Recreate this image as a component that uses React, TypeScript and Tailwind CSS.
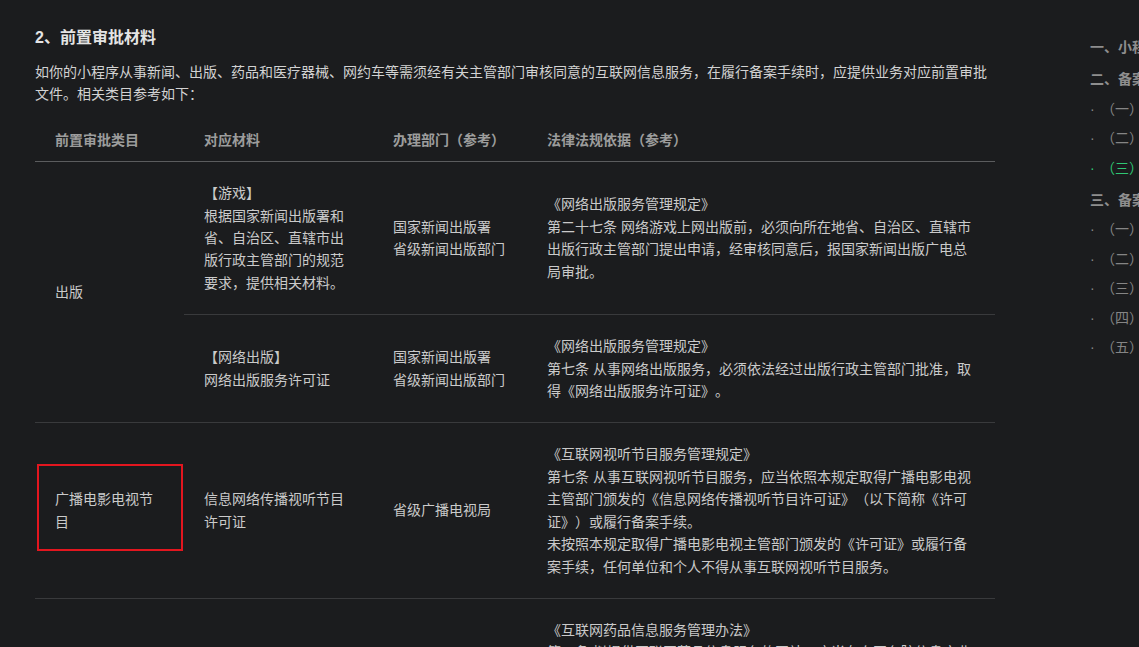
import React from "react";

type TocItem = { label: string; top?: boolean; active?: boolean };

const tocItems: TocItem[] = [
  { label: "一、小程序备案须知", top: true },
  { label: "二、备案材料准备", top: true },
  { label: "（一）主体材料" },
  { label: "（二）小程序材料" },
  { label: "（三）前置审批材料", active: true },
  { label: "三、备案流程", top: true },
  { label: "（一）填写主体信息" },
  { label: "（二）填写小程序信息" },
  { label: "（三）平台初审" },
  { label: "（四）工信部短信核验" },
  { label: "（五）通管局审核" },
];

const td = "px-5 py-5 align-middle border-b border-[#393a3c]";
const th = "px-5 py-[10px] text-left font-semibold text-[#9c9c9c] border-b border-[#5b5c5e]";

const tocColor = (item: TocItem) => {
  if (item.active) return "text-[#2fc774]";
  if (item.top) return "font-semibold text-[#8e8e8e]";
  return "text-[#858585]";
};

const App = () => {
  return (
    <div
      id="page"
      className="w-[1139px] h-[647px] overflow-hidden flex bg-[#1b1c1e] text-[14px] leading-[22.4px] text-[#cacaca] font-['Liberation_Sans','Noto_Sans_CJK_SC',sans-serif] [text-spacing-trim:space-all]"
    >
      <main id="content" className="w-[995px] shrink-0 pl-[35px] pt-[26px]">
        <h2 className="text-[16px] leading-[24px] font-bold text-[#e4e4e4]">2、前置审批材料</h2>
        <p className="mt-[11px] text-[#d2d2d2]">
          如你的小程序从事新闻、出版、药品和医疗器械、网约车等需须经有关主管部门审核同意的互联网信息服务，在履行备案手续时，应提供业务对应前置审批文件。相关类目参考如下：
        </p>

        <table className="mt-[13px] w-[960px] table-fixed">
          <colgroup>
            <col className="w-[149px]" />
            <col className="w-[189px]" />
            <col className="w-[154px]" />
            <col className="w-[468px]" />
          </colgroup>
          <thead>
            <tr>
              <th className={th}>前置审批类目</th>
              <th className={th}>对应材料</th>
              <th className={th}>办理部门（参考）</th>
              <th className={th}>法律法规依据（参考）</th>
            </tr>
          </thead>
          <tbody>
            <tr>
              <td rowSpan={2} className={td}>出版</td>
              <td className={td}>
                【游戏】
                <br />
                根据国家新闻出版署和省、自治区、直辖市出版行政主管部门的规范要求，提供相关材料。
              </td>
              <td className={td}>
                国家新闻出版署
                <br />
                省级新闻出版部门
              </td>
              <td className={td}>
                《网络出版服务管理规定》
                <br />
                第二十七条 网络游戏上网出版前，必须向所在地省、自治区、直辖市出版行政主管部门提出申请，经审核同意后，报国家新闻出版广电总局审批。
              </td>
            </tr>
            <tr>
              <td className={td}>
                【网络出版】
                <br />
                网络出版服务许可证
              </td>
              <td className={td}>
                国家新闻出版署
                <br />
                省级新闻出版部门
              </td>
              <td className={td}>
                《网络出版服务管理规定》
                <br />
                第七条 从事网络出版服务，必须依法经过出版行政主管部门批准，取得《网络出版服务许可证》。
              </td>
            </tr>
            <tr>
              <td className="pl-[2px] pr-px py-5 align-middle border-b border-[#393a3c]">
                <div className="border-2 border-[#e3161f] px-4 pt-[22px] pb-[16px] mb-[6px]">广播电影电视节目</div>
              </td>
              <td className={td}>信息网络传播视听节目许可证</td>
              <td className={td}>省级广播电视局</td>
              <td className={td}>
                《互联网视听节目服务管理规定》
                <br />
                第七条 从事互联网视听节目服务，应当依照本规定取得广播电影电视主管部门颁发的《信息网络传播视听节目许可证》（以下简称《许可证》）或履行备案手续。
                <br />
                未按照本规定取得广播电影电视主管部门颁发的《许可证》或履行备案手续，任何单位和个人不得从事互联网视听节目服务。
              </td>
            </tr>
            <tr>
              <td className={td}>药品和医疗器械</td>
              <td className={td}>互联网药品信息服务资格证书</td>
              <td className={td}>省级药品监督管理部门</td>
              <td className={td}>
                《互联网药品信息服务管理办法》
                <br />
                第五条 拟提供互联网药品信息服务的网站，应当在向国务院信息产业主管部门或者省级电信管理机构申请办理经营许可证或者办理备案手续之前，按照属地监督管理的原则，向该网站主办单位所在地省、自治区、直辖市食品药品监督管理部门提出申请，经审核同意后取得提供互联网药品信息服务的资格。
              </td>
            </tr>
          </tbody>
        </table>
      </main>

      <aside id="toc" className="ml-[95px] w-[220px] shrink-0 pt-[36px]">
        <ul className="flex flex-col gap-[7.5px] whitespace-nowrap">
          {tocItems.map((item, i) => (
            <li
              key={i}
              className={`leading-[22px] ${tocColor(item)} ${item.top && i > 0 ? "mt-[2.5px]" : ""}`}
            >
              {!item.top && <span className="inline-block w-[11px]">·</span>}
              {item.label}
            </li>
          ))}
        </ul>
      </aside>
    </div>
  );
};

export default App;
